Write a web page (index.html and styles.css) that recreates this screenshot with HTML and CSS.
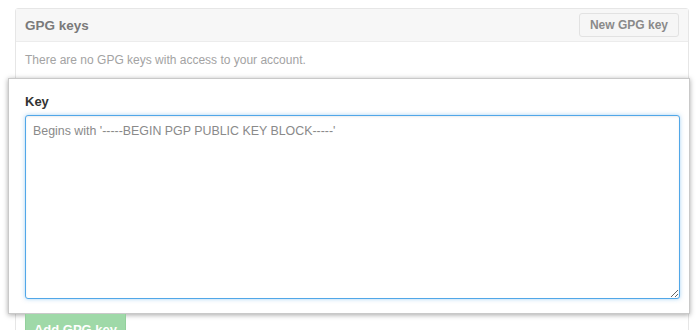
FILE: index.html
```html
<!DOCTYPE html>
<html>
<head>
<meta charset="utf-8">
<link rel="stylesheet" href="styles.css">
</head>
<body>
<div class="page">
  <div class="box">
    <div class="box-header">
      <h3 class="box-title">GPG keys</h3>
      <button class="btn btn-sm">New GPG key</button>
    </div>
    <div class="box-body">
      <p class="blank">There are no GPG keys with access to your account.</p>
      <div class="highlight">
        <label class="label">Key</label>
        <textarea class="input" placeholder="Begins with '-----BEGIN PGP PUBLIC KEY BLOCK-----'"></textarea>
      </div>
      <button class="btn btn-primary" disabled>Add GPG key</button>
    </div>
  </div>
</div>
</body>
</html>
```
FILE: styles.css
```css
html, body {
  margin: 0;
  padding: 0;
  background: #fff;
  font-family: "Liberation Sans", Arial, sans-serif;
  overflow: hidden;
  height: 330px;
}
.page {
  padding: 8px 11px 0 15px;
}
.box {
  border: 1px solid #e6e6e6;
  border-radius: 3px 3px 0 0;
  height: 400px;
}
.box-header {
  display: flex;
  align-items: center;
  justify-content: space-between;
  height: 32px;
  padding: 0 9px 0 9px;
  background: #f7f7f7;
  border-bottom: 1px solid #ececec;
}
.box-title {
  margin: 0;
  font-size: 13.5px;
  font-weight: bold;
  color: #7a7a7a;
}
.btn {
  font-family: "Liberation Sans", Arial, sans-serif;
  font-weight: bold;
  border-radius: 3px;
  cursor: pointer;
}
.btn-sm {
  height: 24px;
  padding: 0 10px;
  font-size: 12px;
  color: #8a8a8a;
  background: #f6f6f6;
  border: 1px solid #e2e2e2;
}
.box-body {
  padding: 0;
}
.blank {
  margin: 0;
  padding: 11px 9px 0 9px;
  height: 25px;
  font-size: 12px;
  color: #a3a3a3;
}
.highlight {
  display: flex;
  flex-direction: column;
  margin-left: -8px;
  width: 664px;
  height: 234px;
  padding: 0 0 0 16px;
  background: #fff;
  border: 1px solid #c9c9c9;
  box-shadow: 0 1px 5px rgba(0, 0, 0, 0.35);
}
.label {
  margin-top: 15px;
  height: 21px;
  font-size: 13px;
  font-weight: bold;
  color: #333;
}
.input {
  width: 655px;
  height: 184px;
  box-sizing: border-box;
  padding: 8px 7px;
  font-family: "Liberation Sans", Arial, sans-serif;
  font-size: 12.4px;
  border: 1px solid #51a7e8;
  border-radius: 3px;
  outline: none;
  resize: vertical;
  box-shadow: inset 0 1px 2px rgba(0, 0, 0, 0.075), 0 0 4px rgba(81, 167, 232, 0.5);
}
.input::placeholder {
  color: #8a8a8a;
}
.btn-primary {
  margin: 0 0 0 9px;
  width: 101px;
  height: 32px;
  font-size: 13px;
  color: #fff;
  background: #9fd9a8;
  border: 1px solid #93d09c;
  border-top: 0;
  border-radius: 0 0 3px 3px;
}
```
